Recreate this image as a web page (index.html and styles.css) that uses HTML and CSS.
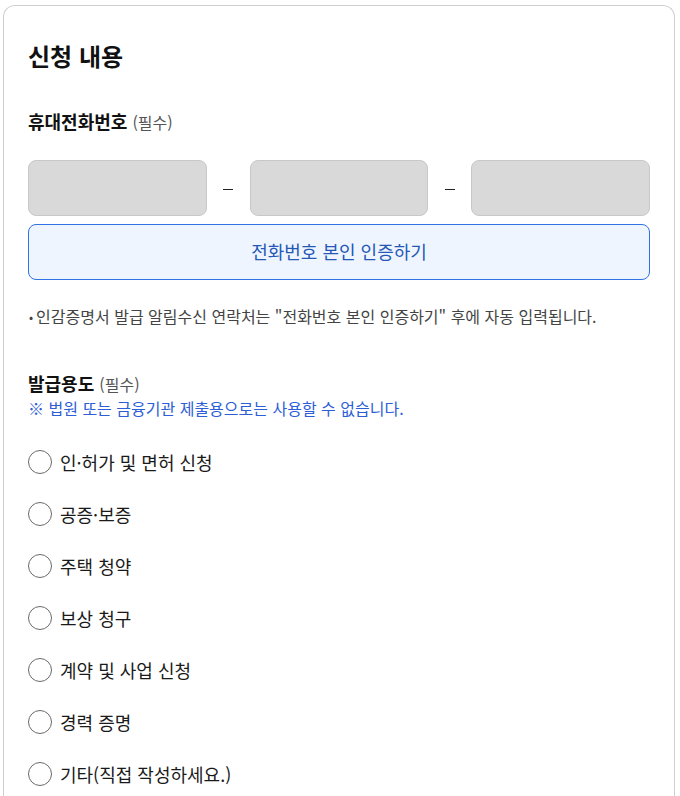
FILE: index.html
```html
<!DOCTYPE html>
<html lang="ko">
<head>
<meta charset="utf-8">
<link rel="stylesheet" href="styles.css">
</head>
<body>
<section class="card">
  <h2 class="title">신청 내용</h2>

  <div class="label">휴대전화번호 <span class="req">(필수)</span></div>
  <div class="phone-row">
    <div class="phone-input"></div>
    <div class="dash"><span></span></div>
    <div class="phone-input"></div>
    <div class="dash"><span></span></div>
    <div class="phone-input"></div>
  </div>
  <button class="verify-btn" type="button">전화번호 본인 인증하기</button>
  <p class="note"><span class="bullet">•</span>인감증명서 발급 알림수신 연락처는 "전화번호 본인 인증하기" 후에 자동 입력됩니다.</p>

  <div class="label label-purpose">발급용도 <span class="req">(필수)</span></div>
  <p class="warn">※ 법원 또는 금융기관 제출용으로는 사용할 수 없습니다.</p>

  <ul class="radios">
    <li><span class="radio"></span>인·허가 및 면허 신청</li>
    <li><span class="radio"></span>공증·보증</li>
    <li><span class="radio"></span>주택 청약</li>
    <li><span class="radio"></span>보상 청구</li>
    <li><span class="radio"></span>계약 및 사업 신청</li>
    <li><span class="radio"></span>경력 증명</li>
    <li><span class="radio"></span>기타(직접 작성하세요.)</li>
  </ul>
</section>
</body>
</html>
```

FILE: styles.css
```css
html, body {
  margin: 0;
  padding: 0;
  background: #fff;
}
body {
  font-family: "Noto Sans CJK KR", "Noto Sans", sans-serif;
  color: #1a1a1a;
  padding: 5px 5px 0 3px;
  height: 796px;
  overflow: hidden;
  box-sizing: border-box;
}
.card {
  border: 1px solid #cfcfcf;
  border-bottom: none;
  border-radius: 12px 12px 0 0;
  padding: 34px 24px 40px 24px;
  min-height: 900px;
}
.title {
  margin: 0;
  font-size: 24px;
  line-height: 32px;
  font-weight: 700;
  color: #111;
}
.label {
  margin-top: 36px;
  font-size: 18px;
  line-height: 26px;
  font-weight: 700;
  color: #111;
}
.req {
  font-size: 16px;
  font-weight: 400;
  color: #555;
}
.phone-row {
  display: flex;
  margin-top: 25px;
  height: 56px;
}
.phone-input {
  flex: 1;
  background: #d9d9d9;
  border: 1px solid #c8c8c8;
  border-radius: 8px;
}
.dash {
  width: 43px;
  display: flex;
  align-items: center;
  justify-content: center;
}
.dash span {
  width: 10px;
  height: 1px;
  background: #222;
  margin-top: 2px;
}
.verify-btn {
  display: block;
  width: 100%;
  margin-top: 8px;
  height: 56px;
  background: #eef5ff;
  border: 1px solid #2f72e4;
  border-radius: 8px;
  font-family: inherit;
  font-size: 18px;
  color: #2558b5;
  cursor: pointer;
  padding: 0 0 2px 0;
}
.note {
  margin: 23px 0 0 0;
  font-size: 16px;
  line-height: 26px;
  color: #444;
}
.bullet {
  font-size: 12px;
  margin-right: 3px;
  margin-left: 1px;
  vertical-align: 1px;
}
.label-purpose {
  margin-top: 40px;
}
.warn {
  margin: 0;
  font-size: 16px;
  line-height: 22px;
  color: #2d5ed6;
}
.radios {
  list-style: none;
  margin: 17px 0 0 0;
  padding: 0;
}
.radios li {
  height: 52px;
  display: flex;
  align-items: center;
  font-size: 18px;
  color: #1a1a1a;
}
.radio {
  width: 24px;
  height: 24px;
  box-sizing: border-box;
  border: 1.5px solid #6a6a6a;
  border-radius: 50%;
  margin-right: 8px;
  flex: none;
}
```
